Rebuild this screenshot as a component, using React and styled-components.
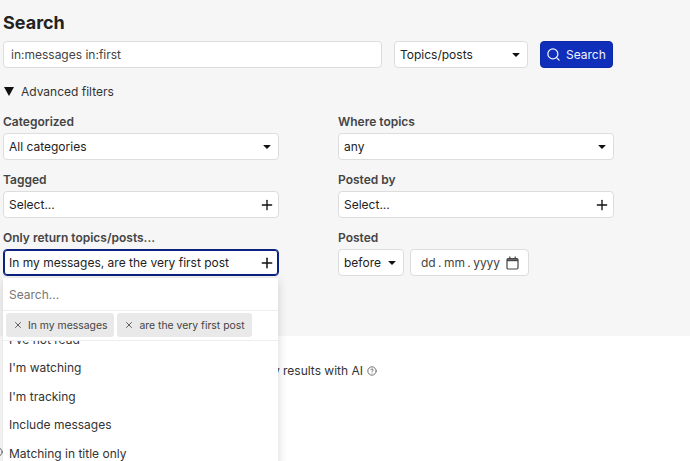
import React from 'react';
import styled, { createGlobalStyle } from 'styled-components';
import { Search as SearchIcon, Plus, X, CircleHelp } from 'lucide-react';

const GlobalStyle = createGlobalStyle`
  html, body {
    margin: 0;
    height: 100%;
    overflow: hidden;
    background: #fff;
    font-family: Inter, "Liberation Sans", sans-serif;
    color: #222;
  }
  * { box-sizing: border-box; }
`;

const Panel = styled.section`
  height: 336px;
  background: #f6f6f6;
  padding: 12px 3px 0;
`;

const Title = styled.h1`
  margin: 0 0 7px;
  font-size: 18px;
  line-height: 22px;
  font-weight: 700;
  color: #222;
`;

const SearchRow = styled.div`
  display: flex;
  gap: 12px;
  width: 610px;
`;

const TextInput = styled.input`
  flex: 1;
  min-width: 0;
  height: 27px;
  padding: 0 7px;
  border: 1px solid #ddd;
  border-radius: 4px;
  background: #fff;
  font: 400 12px Inter, sans-serif;
  color: #444;
`;

const Control = styled.div`
  display: flex;
  align-items: center;
  justify-content: space-between;
  width: ${({ $width }) => $width || '100%'};
  height: 27px;
  padding: 0 7px 0 5px;
  background: #fff;
  border: ${({ $focused }) => ($focused ? '1px solid #0c2180' : '1px solid #ddd')};
  box-shadow: ${({ $focused }) => ($focused ? '0 0 0 1px #0c2180 inset' : 'none')};
  border-radius: 4px;
  font-size: 12px;
  color: #222;
  white-space: nowrap;
  flex-shrink: 0;
`;

const Caret = styled.span`
  width: 0;
  height: 0;
  border-left: 4px solid transparent;
  border-right: 4px solid transparent;
  border-top: 4.5px solid #111;
  border-radius: 1px;
`;

const AddIcon = styled(Plus)`
  margin-right: -4px;
  color: #111;
`;

const SearchButton = styled.button`
  display: flex;
  align-items: center;
  gap: 5px;
  width: 73px;
  height: 27px;
  padding: 0 0 0 5px;
  border: 1px solid #0a2aa8;
  border-radius: 4px;
  background: #0f2fbb;
  color: #f2f4fb;
  font: 400 12px Inter, sans-serif;
`;

const Disclosure = styled.div`
  display: flex;
  align-items: center;
  gap: 7px;
  margin: 15px 0 15px;
  height: 16px;
  font-size: 12px;
  color: #333;
`;

const Triangle = styled.span`
  margin-left: 1px;
  width: 0;
  height: 0;
  border-left: 5px solid transparent;
  border-right: 5px solid transparent;
  border-top: 9px solid #111;
`;

const FilterGrid = styled.div`
  display: grid;
  grid-template-columns: 275.5px 275.5px;
  column-gap: 59.5px;
  row-gap: 12px;
`;

const Field = styled.div`
  position: relative;
`;

const Label = styled.div`
  height: 19px;
  font-size: 12px;
  line-height: 16px;
  font-weight: 600;
  color: #444;
`;

const DateRow = styled.div`
  display: flex;
  gap: 6px;
`;

const DateBox = styled(Control)`
  justify-content: flex-start;
  gap: 6px;
  padding-left: 10px;
  color: #444;
  word-spacing: -1px;

  svg {
    flex-shrink: 0;
  }
`;

const Dropdown = styled.div`
  position: absolute;
  top: 48px;
  left: 0;
  width: 275px;
  height: 200px;
  background: #fff;
  box-shadow: 0 2px 10px rgba(0, 0, 0, 0.16);
  overflow: hidden;
  z-index: 2;
`;

const FilterInput = styled.div`
  height: 33px;
  padding: 0 6px;
  display: flex;
  align-items: center;
  border-bottom: 1px solid #eee;
  font-size: 12px;
  color: #777;
`;

const ChipRow = styled.div`
  position: relative;
  z-index: 1;
  display: flex;
  gap: 3px;
  height: 30px;
  padding: 2px 3px 0;
  background: #fff;
  border-bottom: 1px solid #eee;
`;

const Chip = styled.div`
  display: flex;
  align-items: center;
  gap: 5px;
  height: 24px;
  padding: 0 7px;
  background: #e9e9e9;
  border-radius: 3px;
  font-size: 10.4px;
  color: #444;
`;

const OptionList = styled.div`
  margin-top: -16px;
`;

const Option = styled.div`
  height: 28.5px;
  padding: 0 6px;
  display: flex;
  align-items: center;
  font-size: 12px;
  color: #333;
`;

const AiRow = styled.div`
  display: flex;
  justify-content: flex-end;
  align-items: center;
  gap: 4px;
  width: 377px;
  padding-top: 27px;
  font-size: 12px;
  color: #333;
`;

const HelpIcon = styled(CircleHelp)`
  color: #555;
`;

const CutOffHelp = styled(HelpIcon)`
  display: block;
  margin: 69px 0 0 -7px;
`;

const CalendarIcon = () => (
  <svg width="13" height="14" viewBox="0 0 13 14" fill="none" stroke="#444">
    <rect x="1" y="2.5" width="11" height="10.5" rx="1.2" strokeWidth="1.2" />
    <path d="M1 4.2h11" strokeWidth="2" />
    <path d="M3.8 0.5v2.5M9.2 0.5v2.5" strokeWidth="1.2" />
  </svg>
);

const options = ["I've not read", "I'm watching", "I'm tracking", 'Include messages', 'Matching in title only'];

export default function App() {
  return (
    <>
      <GlobalStyle />
      <Panel>
        <Title>Search</Title>
        <SearchRow>
          <TextInput readOnly value="in:messages in:first" />
          <Control $width="134px">
            Topics/posts
            <Caret />
          </Control>
          <SearchButton>
            <SearchIcon size={15} strokeWidth={2} />
            Search
          </SearchButton>
        </SearchRow>
        <Disclosure>
          <Triangle />
          Advanced filters
        </Disclosure>
        <FilterGrid>
          <Field>
            <Label>Categorized</Label>
            <Control>
              All categories
              <Caret />
            </Control>
          </Field>
          <Field>
            <Label>Where topics</Label>
            <Control>
              any
              <Caret />
            </Control>
          </Field>
          <Field>
            <Label>Tagged</Label>
            <Control>
              Select...
              <AddIcon size={16} strokeWidth={2} />
            </Control>
          </Field>
          <Field>
            <Label>Posted by</Label>
            <Control>
              Select...
              <AddIcon size={16} strokeWidth={2} />
            </Control>
          </Field>
          <Field>
            <Label>Only return topics/posts...</Label>
            <Control $focused>
              In my messages, are the very first post
              <AddIcon size={16} strokeWidth={2.25} />
            </Control>
            <Dropdown>
              <FilterInput>Search...</FilterInput>
              <ChipRow>
                <Chip>
                  <X size={10} />
                  In my messages
                </Chip>
                <Chip>
                  <X size={10} />
                  are the very first post
                </Chip>
              </ChipRow>
              <OptionList>
                {options.map((option) => (
                  <Option key={option}>{option}</Option>
                ))}
              </OptionList>
            </Dropdown>
          </Field>
          <Field>
            <Label>Posted</Label>
            <DateRow>
              <Control $width="66px">
                before
                <Caret />
              </Control>
              <DateBox $width="119px">
                dd . mm . yyyy
                <CalendarIcon />
              </DateBox>
            </DateRow>
          </Field>
        </FilterGrid>
      </Panel>
      <AiRow>
        Show only results with AI
        <HelpIcon size={10} />
      </AiRow>
      <CutOffHelp size={10} />
    </>
  );
}
